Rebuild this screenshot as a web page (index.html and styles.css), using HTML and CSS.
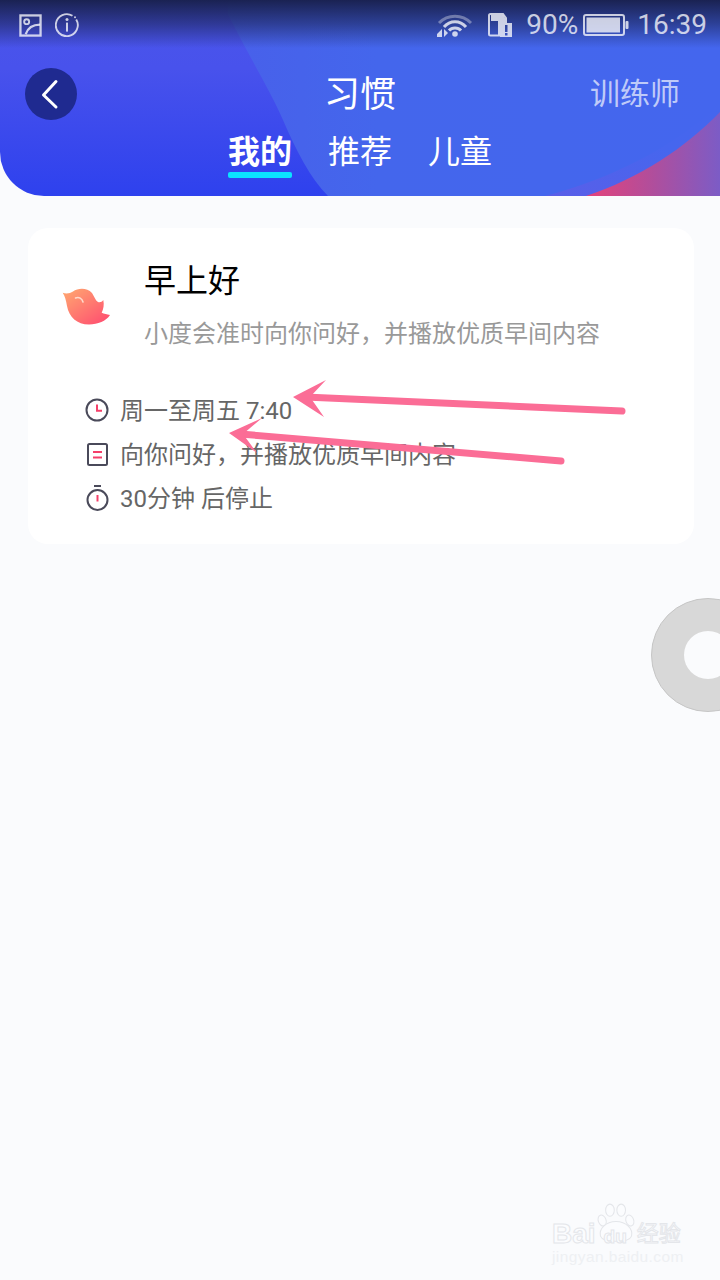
FILE: index.html
```html
<!DOCTYPE html>
<html lang="zh-CN">
<head>
<meta charset="utf-8">
<title>习惯</title>
<link rel="stylesheet" href="styles.css">
</head>
<body>
<div class="page">
  <header class="header">
    <svg class="header-bg" viewBox="0 0 720 196" preserveAspectRatio="none" aria-hidden="true">
      <defs>
        <linearGradient id="baseGrad" x1="0" y1="0" x2="0" y2="1">
          <stop offset="0" stop-color="#4a56ea"/>
          <stop offset="0.35" stop-color="#4852ec"/>
          <stop offset="1" stop-color="#2e41ee"/>
        </linearGradient>
        <linearGradient id="rightGrad" x1="0" y1="0" x2="1" y2="0">
          <stop offset="0" stop-color="#4860ea"/>
          <stop offset="0.3" stop-color="#4466ec"/>
          <stop offset="1" stop-color="#4466ee"/>
        </linearGradient>
        <linearGradient id="haloGrad" x1="0" y1="1" x2="1" y2="0">
          <stop offset="0" stop-color="#5a5ee8"/>
          <stop offset="0.6" stop-color="#4666ee"/>
          <stop offset="1" stop-color="#4466ee"/>
        </linearGradient>
        <linearGradient id="pinkGrad" x1="0" y1="0" x2="1" y2="0">
          <stop offset="0" stop-color="#e5427a"/>
          <stop offset="0.5" stop-color="#b04e9c"/>
          <stop offset="1" stop-color="#7c5cc6"/>
        </linearGradient>
        <linearGradient id="topShade" x1="0" y1="0" x2="0" y2="1">
          <stop offset="0" stop-color="#1a2252"/>
          <stop offset="0.5" stop-color="#1a2252" stop-opacity=".55"/>
          <stop offset="1" stop-color="#1a2252" stop-opacity="0"/>
        </linearGradient>
      </defs>
      <rect width="720" height="196" fill="url(#baseGrad)"/>
      <path d="M228 14 C248 55 270 90 283 120 C296 150 310 178 328 196 L720 196 L720 0 L228 0 Z" fill="url(#rightGrad)"/>
      <path d="M545 196 C615 178 675 145 720 104 L720 196 Z" fill="url(#haloGrad)"/>
      <path d="M586 196 C640 178 685 148 720 112 L720 196 Z" fill="url(#pinkGrad)"/>
      <rect width="720" height="48" fill="url(#topShade)"/>
    </svg>

    <div class="status">
      <div class="status-group">
        <svg class="icon-pic" viewBox="0 0 24 24" aria-hidden="true">
          <rect x="1.500" y="1.500" width="21" height="21" fill="none" stroke="currentColor" stroke-width="2.400"/>
          <circle cx="8" cy="8" r="2.600" fill="none" stroke="currentColor" stroke-width="2"/>
          <path d="M7 21 C9 15 14 11 22 11" fill="none" stroke="currentColor" stroke-width="2.400"/>
        </svg>
        <svg class="icon-info" viewBox="0 0 24 24" aria-hidden="true">
          <path d="M17.500 2.800 A11 11 0 1 0 21.200 6.500" fill="none" stroke="currentColor" stroke-width="1.900"/>
          <circle cx="20" cy="4.200" r="1" fill="currentColor"/>
          <circle cx="12" cy="6.600" r="1.500" fill="currentColor"/>
          <rect x="11" y="9.600" width="2" height="9" fill="currentColor"/>
        </svg>
      </div>
      <div class="status-group status-right">
        <svg class="icon-wifi" viewBox="0 0 36 24" aria-hidden="true">
          <path d="M2 10 C11 1 25 1 34 10" fill="none" stroke="currentColor" stroke-width="3" opacity=".45"/>
          <path d="M7 14 C13 7 23 7 29 14" fill="none" stroke="currentColor" stroke-width="3"/>
          <path d="M12 17.500 C15 14 21 14 24 17.500" fill="none" stroke="currentColor" stroke-width="3"/>
          <circle cx="18" cy="21" r="2.800" fill="currentColor"/>
          <path d="M0 21 L5 16 V24 H0 Z M7 16 L11 20 L7 24 Z" fill="currentColor"/>
        </svg>
        <svg class="icon-sim" viewBox="0 0 24 24" aria-hidden="true">
          <path d="M11 22.500 H2.500 A1.500 1.500 0 0 1 1 21 V2.500 A1.500 1.500 0 0 1 2.500 1 H15 L18 5 V9 H11 Z" fill="none" stroke="currentColor" stroke-width="2"/>
          <path d="M3 2 H15 L17 5 V8 H3 Z" fill="currentColor"/>
          <path d="M12 10 H24 V24 H12 Z M17 12 V19 H19.500 V12 Z M17 20 V22.500 H19.500 V20 Z" fill="currentColor" fill-rule="evenodd"/>
        </svg>
        <span class="status-text">90%</span>
        <svg class="icon-battery" viewBox="0 0 46 22" aria-hidden="true">
          <rect x="1" y="1" width="40" height="20" rx="2" fill="none" stroke="currentColor" stroke-width="2"/>
          <rect x="3.500" y="3.500" width="33.500" height="15" fill="currentColor"/>
          <rect x="42.500" y="7" width="3" height="8" rx="1" fill="currentColor"/>
        </svg>
        <span class="status-text time">16:39</span>
      </div>
    </div>

    <div class="nav">
      <div class="nav-left">
        <button class="back" type="button" aria-label="返回">
          <svg viewBox="0 0 52 52" aria-hidden="true">
            <path d="M31 13.500 L18.500 27 L31 39" fill="none" stroke="#fff" stroke-width="3" stroke-linecap="round" stroke-linejoin="round"/>
          </svg>
        </button>
      </div>
      <h1 class="title">习惯</h1>
      <div class="nav-right">训练师</div>
    </div>

    <nav class="tabs">
      <div class="tab active">我的</div>
      <div class="tab">推荐</div>
      <div class="tab">儿童</div>
    </nav>
  </header>

  <main class="content">
    <section class="card">
      <div class="card-head">
        <svg class="bird" viewBox="0 0 48 38" aria-hidden="true">
          <defs>
            <linearGradient id="birdGrad" x1="0.1" y1="0.1" x2="0.85" y2="0.9">
              <stop offset="0" stop-color="#ffa070"/>
              <stop offset="1" stop-color="#ff5570"/>
            </linearGradient>
          </defs>
          <path d="M.7 5.700 C4 7 8 6.500 11 4.500 C16 1 25 .5 30 6 C32 9 33.500 13.500 36 15 C38 15.500 40 15 41.300 13 C42.300 18 41.500 22 39.700 25.700 C42 26.500 45 27.500 48 28 C44 34 36 37.500 27 37.500 C15 37.500 7 30 5 19 C4 13 3 9 .7 5.700 Z" fill="url(#birdGrad)"/>
          <path d="M13.500 11 C17 9.500 20 11.500 21 15" fill="none" stroke="#ffd9cc" stroke-width="1.600" stroke-linecap="round"/>
        </svg>
        <div class="card-text">
          <h2 class="card-title">早上好</h2>
          <p class="card-sub">小度会准时向你问好，并播放优质早间内容</p>
        </div>
      </div>
      <ul class="rows">
        <li class="row">
          <svg class="row-icon" viewBox="0 0 24 24" aria-hidden="true">
            <circle cx="12" cy="12" r="10.500" fill="none" stroke="#4a4a5a" stroke-width="2"/>
            <path d="M12 6.500 V12.800 H17" fill="none" stroke="#f5406a" stroke-width="2"/>
          </svg>
          <span>周一至周五 7:40</span>
        </li>
        <li class="row">
          <svg class="row-icon" viewBox="0 0 24 24" aria-hidden="true">
            <rect x="3" y="2" width="19" height="21" rx="1.500" fill="none" stroke="#4a4a5a" stroke-width="2"/>
            <path d="M8 10 H17 M8 15.500 H17" fill="none" stroke="#f5406a" stroke-width="2"/>
          </svg>
          <span>向你问好，并播放优质早间内容</span>
        </li>
        <li class="row">
          <svg class="row-icon tall" viewBox="0 0 24 26" aria-hidden="true">
            <circle cx="12.500" cy="15" r="10" fill="none" stroke="#4a4a5a" stroke-width="2"/>
            <path d="M9 1 H16" fill="none" stroke="#4a4a5a" stroke-width="2"/>
            <path d="M12.500 10 V16.500" fill="none" stroke="#f5406a" stroke-width="2"/>
          </svg>
          <span>30分钟 后停止</span>
        </li>
      </ul>
    </section>
  </main>

  <svg class="arrows" viewBox="0 0 720 1280" aria-hidden="true">
    <path d="M622 411 L305 397" fill="none" stroke="#fb6d96" stroke-width="7" stroke-linecap="round"/>
    <path d="M293 397 L326 380 L310 397 L324 417 Z" fill="#fb6d96"/>
    <path d="M561 461 L240 434" fill="none" stroke="#fb6d96" stroke-width="7" stroke-linecap="round"/>
    <path d="M229 433 L262 418 L243 434 L257 453 Z" fill="#fb6d96"/>
  </svg>

  <div class="float-ball"><div class="float-hole"></div></div>

  <div class="watermark" aria-label="Baidu经验">
    <svg class="paw" viewBox="0 0 44 48" aria-hidden="true">
      <g fill="#fbfcfe" stroke="#e4e6ea" stroke-width="1.200">
        <ellipse cx="6" cy="20" rx="4.500" ry="6.500" transform="rotate(-20 6 20)"/>
        <ellipse cx="15" cy="8" rx="5" ry="7"/>
        <ellipse cx="28" cy="8" rx="5" ry="7"/>
        <ellipse cx="38" cy="20" rx="4.500" ry="6.500" transform="rotate(-20 38 20)"/>
        <path d="M22 21 C34 21 42 30 40 38 C37 46 7 46 4 38 C2 30 10 21 22 21 Z"/>
      </g>
    </svg>
    <div class="wm-top"><span class="wm-baidu">Bai<span class="wm-du">du</span></span><span class="wm-cn">经验</span></div>
    <div class="wm-url">jingyan.baidu.com</div>
  </div>
</div>
</body>
</html>
```

FILE: styles.css
```css
* { box-sizing: border-box; }
html, body { margin: 0; padding: 0; height: 100%; }
body {
  background: #fafbfd;
  font-family: Roboto, "Noto Sans CJK SC", sans-serif;
}
.page {
  position: relative;
  width: 720px;
  height: 1280px;
  overflow: hidden;
  background: #fafbfd;
}

/* header */
.header {
  position: relative;
  height: 196px;
  overflow: hidden;
  border-bottom-left-radius: 44px;
  color: #fff;
}
.header-bg {
  position: absolute;
  left: 0;
  top: 0;
  width: 100%;
  height: 100%;
}
.status, .nav, .tabs { position: relative; }

.status {
  display: flex;
  justify-content: space-between;
  align-items: center;
  height: 50px;
  padding: 0 13px 0 19px;
  color: rgba(255, 255, 255, .76);
}
.status-group { display: flex; align-items: center; gap: 13px; }
.status-right { gap: 0; }
.icon-pic { width: 23px; height: 23px; }
.icon-info { width: 24px; height: 24px; }
.icon-wifi { width: 36px; height: 24px; }
.icon-sim { width: 24px; height: 24px; margin-left: 15px; }
.icon-battery { width: 46px; height: 22px; margin-left: 5px; }
.status-text { font-size: 28px; line-height: 50px; margin-left: 14px; }
.status-text.time { margin-left: 8px; }

.nav {
  display: grid;
  grid-template-columns: 1fr auto 1fr;
  align-items: center;
  height: 52px;
  margin-top: 18px;
  padding: 0 40px;
}
.back {
  display: block;
  width: 52px;
  height: 52px;
  margin-left: -15px;
  padding: 0;
  border: 0;
  border-radius: 50%;
  background: #1f2a90;
}
.back svg { display: block; width: 52px; height: 52px; }
.title {
  margin: 0;
  width: 72px;
  height: 52px;
  padding-top: 2px;
  font-size: 36px;
  font-weight: 400;
  line-height: 50px;
  text-align: center;
  white-space: nowrap;
}
.nav-right {
  justify-self: end;
  height: 52px;
  font-size: 30px;
  line-height: 52px;
  color: rgba(255, 255, 255, .68);
}

.tabs {
  display: flex;
  justify-content: center;
  gap: 36px;
  margin-top: 9px;
}
.tab {
  position: relative;
  width: 64px;
  height: 49px;
  padding-top: 2px;
  font-size: 32px;
  line-height: 43px;
  text-align: center;
  white-space: nowrap;
}
.tab.active { font-weight: 700; }
.tab.active::after {
  content: "";
  position: absolute;
  left: 0;
  right: 0;
  bottom: 0;
  height: 6px;
  border-radius: 2px;
  background: #0be3ff;
}

/* card */
.content { padding: 32px 26px 0 28px; }
.card {
  height: 316px;
  border-radius: 20px;
  background: #fff;
  padding: 33px 0 0 34px;
}
.card-head { display: flex; align-items: center; gap: 34px; }
.bird { display: block; width: 48px; height: 38px; flex: none; }
.card-text { min-width: 0; }
.card-title {
  margin: 0;
  font-size: 32px;
  font-weight: 400;
  line-height: 40px;
  color: #000;
}
.card-sub {
  margin: 16px 0 0;
  font-size: 24px;
  line-height: 34px;
  color: #999;
  white-space: nowrap;
}
.rows {
  list-style: none;
  margin: 35px 0 0;
  padding: 0 0 0 23px;
}
.row {
  display: flex;
  align-items: center;
  gap: 11px;
  height: 44px;
  font-size: 24px;
  color: #666;
  white-space: nowrap;
}
.row-icon { display: block; width: 24px; height: 24px; margin-top: 4px; flex: none; }
.row-icon.tall { height: 26px; }

/* overlays */
.arrows {
  position: absolute;
  left: 0;
  top: 0;
  width: 720px;
  height: 1280px;
  pointer-events: none;
}
.float-ball {
  position: absolute;
  left: 651px;
  top: 598px;
  width: 114px;
  height: 114px;
  display: flex;
  align-items: center;
  justify-content: center;
  border: 1px solid #c6c6c6;
  border-radius: 50%;
  background: #d8d8d8;
}
.float-hole {
  width: 48px;
  height: 48px;
  border-radius: 50%;
  background: #fafbfd;
}
.watermark {
  position: absolute;
  left: 552px;
  top: 1202px;
  width: 132px;
  height: 62px;
}
.paw {
  position: absolute;
  left: 45px;
  top: 1px;
  width: 38px;
  height: 42px;
}
.wm-top {
  position: absolute;
  left: 0;
  top: 18px;
  display: flex;
  align-items: flex-start;
  height: 28px;
  white-space: nowrap;
}
.wm-baidu {
  font-family: "Liberation Sans", sans-serif;
  font-size: 28px;
  font-weight: 700;
  line-height: 28px;
  color: #fbfcfe;
  -webkit-text-stroke: 1px #e4e6ea;
}
.wm-du { font-size: 19px; margin-left: 8px; }
.wm-cn {
  margin-left: 10px;
  font-family: "Noto Sans CJK SC", sans-serif;
  font-size: 22px;
  line-height: 22px;
  color: #fbfcfe;
  -webkit-text-stroke: 1px #e4e6ea;
}
.wm-url {
  position: absolute;
  left: 0;
  top: 47px;
  font-family: "Liberation Sans", sans-serif;
  font-size: 15.500px;
  line-height: 16px;
  letter-spacing: .4px;
  color: #eef0f3;
  white-space: nowrap;
}
```
